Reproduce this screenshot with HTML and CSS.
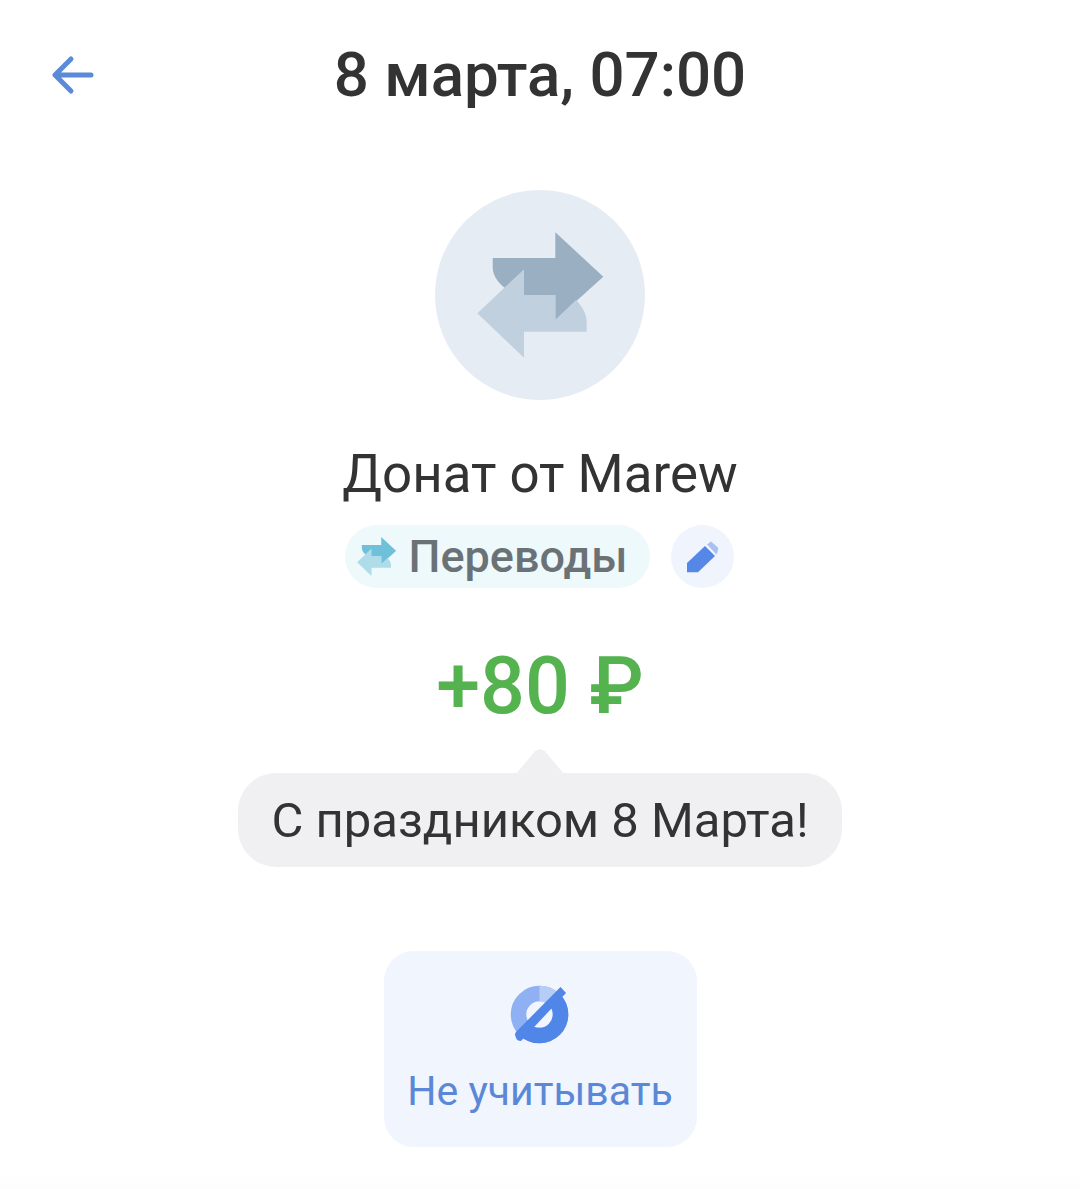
FILE: index.html
```html
<!DOCTYPE html>
<html lang="ru">
<head>
<meta charset="utf-8">
<title>Донат от Marew</title>
<link rel="stylesheet" href="styles.css">
</head>
<body>
<main class="screen">
  <header class="header">
    <svg class="back" viewBox="0 0 44 40" aria-hidden="true"><path d="M40 20H4M20 4 4 20l16 16"/></svg>
    <h1 class="title">8 марта, 07:00</h1>
  </header>
  <div class="avatar">
    <svg class="avatar-icon" viewBox="0 0 210 210" aria-hidden="true">
      <path class="arrow-dark" d="M57.7 68H120.3V42.3L168.3 86.7 120.3 130V105H89C72 104 58 90 57.7 78Z"/>
      <path class="arrow-light" d="M151.7 141.7H89V167.7L42.3 123.3 89 79.3V105H120.3V130L141 110C148 117 151.7 125 151.7 132Z"/>
    </svg>
  </div>
  <h2 class="name">Донат от Marew</h2>
  <div class="tags">
    <div class="chip">
      <svg class="chip-icon" viewBox="0 0 126 126" aria-hidden="true">
        <path class="chip-dark" d="M15.7 26H78.3V0.3L126.3 44.7 78.3 88V63H47C30 62 16 48 15.7 36Z"/>
        <path class="chip-light" d="M109.7 99.7H47V125.7L0.3 81.3 47 37.3V63H78.3V88L99 68C106 75 109.7 83 109.7 90Z"/>
      </svg>
      <span class="chip-label">Переводы</span>
    </div>
    <button class="edit" type="button" aria-label="Изменить">
      <svg class="edit-icon" viewBox="0 0 63 63" aria-hidden="true">
        <path class="pencil-body" d="M16 38 34 21 44 31 27 47.3H16Z"/>
        <path class="pencil-cap" d="M36 19.5 40 16.5 47 22.5V25L45.5 29.5Z"/>
      </svg>
    </button>
  </div>
  <div class="amount">+80 ₽</div>
  <div class="comment">С праздником 8 Марта!</div>
  <button class="action" type="button">
    <svg class="action-icon" viewBox="0 0 60 60" aria-hidden="true">
      <circle class="ring-light" cx="29.5" cy="29.5" r="21"/>
      <path class="ring-pale" d="M29.5 8.5A21 21 0 0 1 44.4 14.6"/>
      <path class="ring-dark" d="M44.4 14.6A21 21 0 0 1 14.6 44.4"/>
      <path class="slash" d="M50.5 2 56 8 11 56Q7.5 56 6.5 54L5 50Q5 48 6 47Z"/>
    </svg>
    <span class="action-label">Не учитывать</span>
  </button>
</main>
</body>
</html>
```
FILE: styles.css
```css
* { box-sizing: border-box; }
html, body { margin: 0; padding: 0; background: #fff; }
body { font-family: Roboto, "Noto Sans", sans-serif; color: #333; }
.screen {
  width: 1080px;
  height: 1189px;
  overflow: hidden;
  display: flex;
  flex-direction: column;
  align-items: center;
  background: linear-gradient(#fff 1170px, #fdfdfd 1189px);
}
.header {
  position: relative;
  width: 100%;
  height: 150px;
  padding-top: 40px;
  text-align: center;
}
.back {
  position: absolute;
  left: 51px;
  top: 55px;
  width: 44px;
  height: 40px;
  fill: none;
  stroke: #5b8ad9;
  stroke-width: 5;
  stroke-linecap: round;
  stroke-linejoin: round;
}
.title { margin: 0; font-size: 61.8px; line-height: 70px; font-weight: 500; color: #333; }
.avatar {
  width: 210px;
  height: 210px;
  margin-top: 40px;
  border-radius: 50%;
  background: #e6ecf4;
  flex: none;
}
.avatar-icon { display: block; width: 210px; height: 210px; }
.arrow-dark { fill: #9aafc1; }
.arrow-light { fill: #c1d0de; }
.name { margin: 43px 0 0; font-size: 52.85px; line-height: 62px; font-weight: 400; color: #333; }
.tags { display: flex; gap: 21px; margin-top: 20px; margin-left: -2px; }
.chip {
  width: 305px;
  height: 63px;
  border-radius: 32px;
  background: #eef9fc;
  display: flex;
  align-items: center;
  padding-left: 12px;
  gap: 13px;
}
.chip-icon { width: 39px; height: 39px; flex: none; }
.chip-dark { fill: #6fc0d9; }
.chip-light { fill: #aedce9; }
.chip-label { font-size: 45px; line-height: 63px; font-weight: 500; color: #6b7276; }
.edit {
  width: 63px;
  height: 63px;
  padding: 0;
  border: 0;
  border-radius: 50%;
  background: #f0f4fd;
}
.edit-icon { display: block; width: 63px; height: 63px; }
.pencil-body { fill: #5587e6; }
.pencil-cap { fill: #a8c1f4; }
.amount {
  margin-top: 58px;
  font-size: 79px;
  line-height: 80px;
  font-weight: 500;
  color: #54b34f;
}
.comment {
  position: relative;
  width: 604px;
  height: 94px;
  margin-top: 47px;
  border-radius: 38px;
  background: #f0f0f2;
  font-size: 49px;
  line-height: 96px;
  text-align: center;
  color: #333;
}
.comment::before {
  content: "";
  position: absolute;
  left: 278px;
  top: -24px;
  width: 48px;
  height: 25px;
  background: #f0f0f2;
  clip-path: polygon(0 100%, 40% 8%, 50% 0, 60% 8%, 100% 100%);
}
.action {
  width: 313px;
  height: 196px;
  margin-top: 84px;
  padding: 0;
  border: 0;
  border-radius: 30px;
  background: #f0f5fe;
  display: flex;
  flex-direction: column;
  align-items: center;
  font-family: inherit;
}
.action-icon { width: 60px; height: 60px; margin-top: 34px; fill: none; flex: none; }
.ring-light { stroke: #8fb0f3; stroke-width: 15.5; fill: none; }
.ring-pale { stroke: #b7cdf7; stroke-width: 15.5; }
.ring-dark { stroke: #5186e9; stroke-width: 15.5; }
.slash { fill: #5186e9; }
.action-label { margin-top: 23px; font-size: 41px; line-height: 46px; color: #5b88d6; }
```
